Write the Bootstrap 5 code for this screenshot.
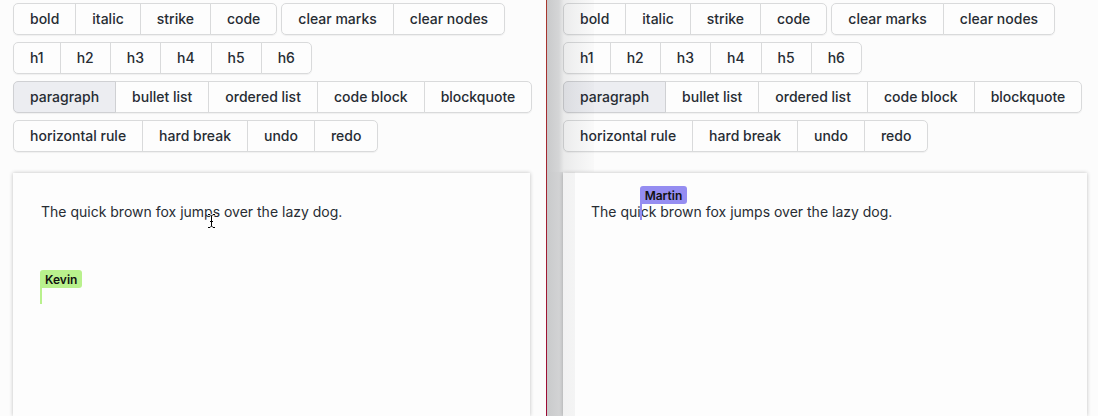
<!DOCTYPE html>
<html lang="en">
<head>
<meta charset="utf-8">
<meta name="viewport" content="width=device-width, initial-scale=1">
<title>Collaborative editor</title>
<link href="https://cdn.jsdelivr.net/npm/bootstrap@5.3.0/dist/css/bootstrap.min.css" rel="stylesheet">
<style>
  body { font-family: Inter, "Liberation Sans", sans-serif; font-size: 14px; color: #272c33; background: #fcfcfc; }
  .pane-left { width: calc(50% - 2px); padding: 3px 16px 0 13px; border-right: 1px solid #a5232c; border-image: linear-gradient(#a8392f, #9c0a35) 1; }
  .pane-right { padding: 3px 11px 0 16px; }
  .toolbar { gap: 7px; }
  .tool-row { gap: 4px; }
  .btn-tool {
    --bs-btn-font-size: 14px; --bs-btn-font-weight: 500; --bs-btn-line-height: 20px;
    --bs-btn-padding-x: 16px; --bs-btn-padding-y: 5px; --bs-btn-border-radius: 5px;
    --bs-btn-color: #272c33; --bs-btn-bg: #fdfdfd; --bs-btn-border-color: #d9dadb;
    --bs-btn-hover-bg: #f3f3f5; --bs-btn-hover-border-color: #cfd0d2; --bs-btn-hover-color: #272c33;
    --bs-btn-active-bg: #ecedf1; --bs-btn-active-border-color: #cfd0d3; --bs-btn-active-color: #272c33;
    flex: none; white-space: nowrap;
  }
  .btn-group { border-radius: 5px; box-shadow: 0 1px 1px rgba(0,0,0,.05); }
  .sheet { margin-top: 21px; padding: 25px 28px; background: #fdfdfd; box-shadow: 0 0 4px rgba(0,0,0,.24); outline: 0; }
  .sheet p { margin: 0; min-height: 28px; line-height: 28px; }
  .peer { display: inline-block; width: 2px; height: 16px; margin: 0 -1px; vertical-align: -3px; background: var(--peer); }
  .peer-name { left: 0; bottom: 100%; padding: 1px 5px 0; border-radius: 3px 3px 3px 0; background: var(--peer); color: #111; font-size: 12px; font-weight: 600; line-height: 17px; white-space: nowrap; }
  .kevin { --peer: #b9f18d; }
  .martin { --peer: #958df1; }
  .window-shade { inset: 0 auto 0 0; width: 47px; pointer-events: none; z-index: 3;
    background:
      linear-gradient(90deg, rgba(20,24,30,.22), rgba(20,24,30,.17) 12px, rgba(20,24,30,.08) 17px, rgba(20,24,30,.05) 28px, rgba(20,24,30,.015) 46px) 0 0 / 100% 172px no-repeat,
      linear-gradient(90deg, rgba(20,24,30,.22), rgba(20,24,30,.17) 16px, rgba(20,24,30,.05) 16px, rgba(20,24,30,.04) 28px, transparent 28px) 0 172px no-repeat; }
  .pointer { left: 207px; top: 213px; }
</style>
</head>
<body>
<main class="row g-0 vh-100 overflow-hidden">
  <section class="col-auto d-flex flex-column vh-100 position-relative pane-left" aria-label="Editor one">
    <div class="toolbar d-flex flex-column">
      <div class="tool-row d-flex">
        <div class="btn-group"><button type="button" class="btn btn-tool">bold</button><button type="button" class="btn btn-tool">italic</button><button type="button" class="btn btn-tool">strike</button><button type="button" class="btn btn-tool">code</button></div>
        <div class="btn-group"><button type="button" class="btn btn-tool">clear marks</button><button type="button" class="btn btn-tool">clear nodes</button></div>
      </div>
      <div class="tool-row d-flex">
        <div class="btn-group"><button type="button" class="btn btn-tool">h1</button><button type="button" class="btn btn-tool">h2</button><button type="button" class="btn btn-tool">h3</button><button type="button" class="btn btn-tool">h4</button><button type="button" class="btn btn-tool">h5</button><button type="button" class="btn btn-tool">h6</button></div>
      </div>
      <div class="tool-row d-flex">
        <div class="btn-group"><button type="button" class="btn btn-tool active">paragraph</button><button type="button" class="btn btn-tool">bullet list</button><button type="button" class="btn btn-tool">ordered list</button><button type="button" class="btn btn-tool">code block</button><button type="button" class="btn btn-tool">blockquote</button></div>
      </div>
      <div class="tool-row d-flex">
        <div class="btn-group"><button type="button" class="btn btn-tool">horizontal rule</button><button type="button" class="btn btn-tool">hard break</button><button type="button" class="btn btn-tool">undo</button><button type="button" class="btn btn-tool">redo</button></div>
      </div>
    </div>
    <div class="sheet flex-grow-1" contenteditable="true" role="textbox" aria-label="Document">
      <p>The quick brown fox jumps over the lazy dog.</p>
      <p></p>
      <p></p>
      <p><span class="peer kevin position-relative"><span class="peer-name position-absolute">Kevin</span></span></p>
    </div>
    <svg class="pointer position-absolute" width="9" height="16" viewBox="0 0 9 16" fill="none" aria-hidden="true">
      <path d="M1 1.500H3L4.500 3L6 1.500H8M4.500 3V13M3 8.500H6M1 14.500H3L4.500 13L6 14.500H8" stroke="#fff" stroke-width="2"/>
      <path d="M1 1.500H3L4.500 3L6 1.500H8M4.500 3V13M3 8.500H6M1 14.500H3L4.500 13L6 14.500H8" stroke="#000"/>
    </svg>
  </section>
  <section class="col d-flex flex-column vh-100 position-relative pane-right" aria-label="Editor two">
    <div class="toolbar d-flex flex-column">
      <div class="tool-row d-flex">
        <div class="btn-group"><button type="button" class="btn btn-tool">bold</button><button type="button" class="btn btn-tool">italic</button><button type="button" class="btn btn-tool">strike</button><button type="button" class="btn btn-tool">code</button></div>
        <div class="btn-group"><button type="button" class="btn btn-tool">clear marks</button><button type="button" class="btn btn-tool">clear nodes</button></div>
      </div>
      <div class="tool-row d-flex">
        <div class="btn-group"><button type="button" class="btn btn-tool">h1</button><button type="button" class="btn btn-tool">h2</button><button type="button" class="btn btn-tool">h3</button><button type="button" class="btn btn-tool">h4</button><button type="button" class="btn btn-tool">h5</button><button type="button" class="btn btn-tool">h6</button></div>
      </div>
      <div class="tool-row d-flex">
        <div class="btn-group"><button type="button" class="btn btn-tool active">paragraph</button><button type="button" class="btn btn-tool">bullet list</button><button type="button" class="btn btn-tool">ordered list</button><button type="button" class="btn btn-tool">code block</button><button type="button" class="btn btn-tool">blockquote</button></div>
      </div>
      <div class="tool-row d-flex">
        <div class="btn-group"><button type="button" class="btn btn-tool">horizontal rule</button><button type="button" class="btn btn-tool">hard break</button><button type="button" class="btn btn-tool">undo</button><button type="button" class="btn btn-tool">redo</button></div>
      </div>
    </div>
    <div class="sheet flex-grow-1" contenteditable="true" role="textbox" aria-label="Document">
      <p>The qui<span class="peer martin position-relative"><span class="peer-name position-absolute">Martin</span></span>ck brown fox jumps over the lazy dog.</p>
    </div>
    <div class="window-shade position-absolute"></div>
  </section>
</main>
<script src="https://cdn.jsdelivr.net/npm/bootstrap@5.3.0/dist/js/bootstrap.bundle.min.js"></script>
</body>
</html>
